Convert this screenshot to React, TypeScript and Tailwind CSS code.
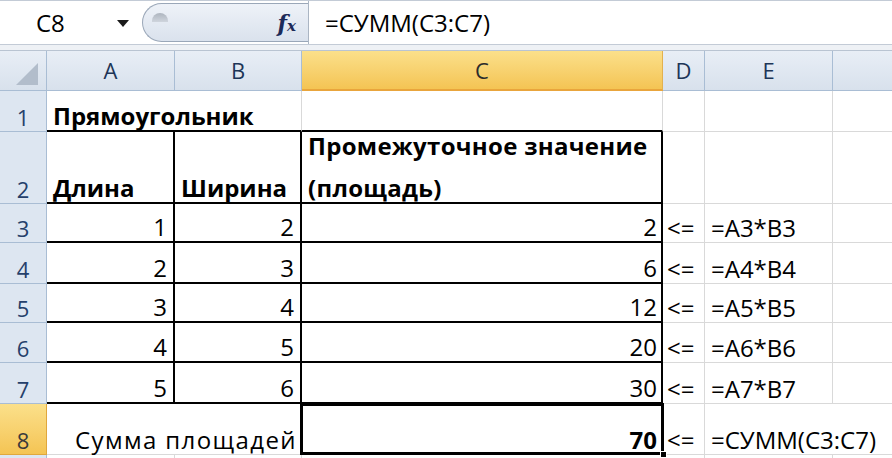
import React from "react";

const rows: [number, number, number, number, string, number][] = [
  [3, 1, 2, 2, "=A3*B3", 39],
  [4, 2, 3, 6, "=A4*B4", 41],
  [5, 3, 4, 12, "=A5*B5", 39],
  [6, 4, 5, 20, "=A6*B6", 40],
  [7, 5, 6, 30, "=A7*B7", 41],
];

function RowHead({ n, sel }: { n: number; sel?: boolean }) {
  return (
    <div
      className={
        sel
          ? "flex items-end justify-center border-r border-b border-[#e0a73c] bg-gradient-to-b from-[#fbe08a] to-[#f4c453] text-[22px] leading-[28px] text-[#3b3b3b]"
          : "flex items-end justify-center border-r border-b border-[#a9bdd4] bg-[#dde6f1] text-[22px] leading-[28px] text-[#25406b]"
      }
    >
      {n}
    </div>
  );
}

export default function App() {
  return (
    <div className="h-[458px] w-[892px] overflow-hidden bg-white font-['Open_Sans',sans-serif] text-black">
      {/* formula bar */}
      <div className="flex h-[45px] border-t border-b border-[#c3cbd6] bg-white">
        <div className="relative flex w-[142px] items-center">
          <span className="ml-[36px] text-[24px] leading-none">C8</span>
          <svg className="absolute left-[117px] top-[19px]" width="12" height="8" viewBox="0 0 12 8">
            <path d="M0 0H12L6 7Z" fill="#1a1a1a" />
          </svg>
        </div>
        <div className="relative my-[2px] flex w-[166px] items-center justify-end rounded-l-[22px] border border-r-0 border-[#9aa7b8] bg-gradient-to-b from-[#eef2f8] to-[#dae2ed] pr-[12px]">
          <div className="absolute left-[9px] top-[9px] h-[9px] w-[16px] rounded-t-full bg-gradient-to-b from-[#aeb5bf] to-[#cfd5dd]" />
          <span className="font-['DejaVu_Serif',serif] text-[22px] font-bold italic leading-none text-[#1c2a58]">
            f<span className="text-[15px]">x</span>
          </span>
        </div>
        <div className="flex flex-1 items-center border-l border-[#aab5c3] pl-[16px] text-[24px] leading-none">
          =СУММ(C3:C7)
        </div>
      </div>
      <div className="h-[6px] border-b border-[#b9c4d2] bg-[#eef1f5]" />

      {/* grid */}
      <div className="grid grid-cols-[47px_128px_127px_361px_42px_128px_59px] grid-rows-[40px_41px_72px_39px_41px_39px_40px_41px_51px_10px]">
        {/* header row */}
        <div className="relative border-r border-b border-[#a9bdd4] bg-gradient-to-b from-[#e8eef6] to-[#d8e1ec]">
          <svg className="absolute left-[16px] top-[12px]" width="22" height="22" viewBox="0 0 22 22">
            <path d="M22 0V22H0Z" fill="#b2bdcb" />
          </svg>
        </div>
        <div className="flex items-center justify-center border-r border-b border-[#a9bdd4] bg-gradient-to-b from-[#e8eef6] to-[#d8e1ec] text-[22px] text-[#1d3557]">A</div>
        <div className="flex items-center justify-center border-r border-b border-[#a9bdd4] bg-gradient-to-b from-[#e8eef6] to-[#d8e1ec] text-[22px] text-[#1d3557]">B</div>
        <div className="flex items-center justify-center border-r border-b-2 border-r-[#e3b14e] border-b-[#e9a53c] bg-gradient-to-b from-[#fbe08a] to-[#f4c453] text-[22px] text-[#2b2b2b]">C</div>
        <div className="flex items-center justify-center border-r border-b border-[#a9bdd4] bg-gradient-to-b from-[#e8eef6] to-[#d8e1ec] text-[22px] text-[#1d3557]">D</div>
        <div className="flex items-center justify-center border-r border-b border-[#a9bdd4] bg-gradient-to-b from-[#e8eef6] to-[#d8e1ec] text-[22px] text-[#1d3557]">E</div>
        <div className="border-b border-[#a9bdd4] bg-gradient-to-b from-[#e8eef6] to-[#d8e1ec]" />

        {/* row 1 */}
        <RowHead n={1} />
        <div className="col-span-2 flex items-end border-r border-b-2 border-r-[#d9d9d9] border-b-black px-[6px] text-[24px] font-bold leading-[28px]">
          Прямоугольник
        </div>
        <div className="border-r border-b-2 border-r-[#d9d9d9] border-b-black" />
        <div className="border-r border-b border-[#d9d9d9]" />
        <div className="border-r border-b border-[#d9d9d9]" />
        <div className="border-b border-[#d9d9d9]" />

        {/* row 2 */}
        <RowHead n={2} />
        <div className="flex items-end border-r-2 border-b-2 border-black px-[6px] text-[24px] font-bold leading-[28px]">Длина</div>
        <div className="flex items-end border-r-2 border-b-2 border-black px-[6px] text-[24px] font-bold leading-[28px]">Ширина</div>
        <div className="flex flex-col justify-end gap-[14px] border-r-2 border-b-2 border-black px-[6px] text-[24px] font-bold leading-[28px] tracking-[0.3px] whitespace-nowrap">
          <span>Промежуточное значение</span>
          <span>(площадь)</span>
        </div>
        <div className="border-r border-b border-[#d9d9d9]" />
        <div className="border-r border-b border-[#d9d9d9]" />
        <div className="border-b border-[#d9d9d9]" />

        {rows.map(([n, a, b, c, f]) => (
          <React.Fragment key={n}>
            <RowHead n={n} />
            <div className="flex items-end justify-end border-r-2 border-b-2 border-black px-[6px] text-[24px] leading-[28px]">{a}</div>
            <div className="flex items-end justify-end border-r-2 border-b-2 border-black px-[6px] text-[24px] leading-[28px]">{b}</div>
            <div className="flex items-end justify-end border-r-2 border-b-2 border-black px-[4px] text-[24px] leading-[28px]">{c}</div>
            <div className="flex items-end border-r border-b border-[#d9d9d9] px-[4px] text-[24px] leading-[28px] whitespace-nowrap">&lt;=</div>
            <div className="flex items-end border-r border-b border-[#d9d9d9] px-[6px] text-[24px] leading-[28px]">{f}</div>
            <div className="border-b border-[#d9d9d9]" />
          </React.Fragment>
        ))}

        {/* row 8 */}
        <RowHead n={8} sel />
        <div className="col-span-2 flex items-end justify-end border-b border-[#d9d9d9] pr-[5px] text-[24px] leading-[28px] tracking-[1.4px]">Сумма площадей</div>
        <div className="relative flex items-end justify-end border-b border-[#d9d9d9] px-[6px] text-[24px] font-bold leading-[28px]">
          70
          <div className="absolute -top-[1px] -left-[2px] -right-[1px] -bottom-[1px] border-[3px] border-black" />
          <div className="absolute -right-[4px] -bottom-[4px] h-[7px] w-[7px] border border-white bg-black" />
        </div>
        <div className="flex items-end border-r border-b border-[#d9d9d9] px-[4px] text-[24px] leading-[28px] whitespace-nowrap">&lt;=</div>
        <div className="col-span-2 flex items-end border-b border-[#d9d9d9] px-[6px] text-[24px] leading-[28px] whitespace-nowrap">=СУММ(C3:C7)</div>

        {/* row 9 partial */}
        <div className="border-r border-[#a9bdd4] bg-[#dde6f1]" />
        <div className="border-r border-[#d9d9d9]" />
        <div className="border-r border-[#d9d9d9]" />
        <div className="border-r border-[#d9d9d9]" />
        <div className="border-r border-[#d9d9d9]" />
        <div className="border-r border-[#d9d9d9]" />
        <div />
      </div>
    </div>
  );
}
